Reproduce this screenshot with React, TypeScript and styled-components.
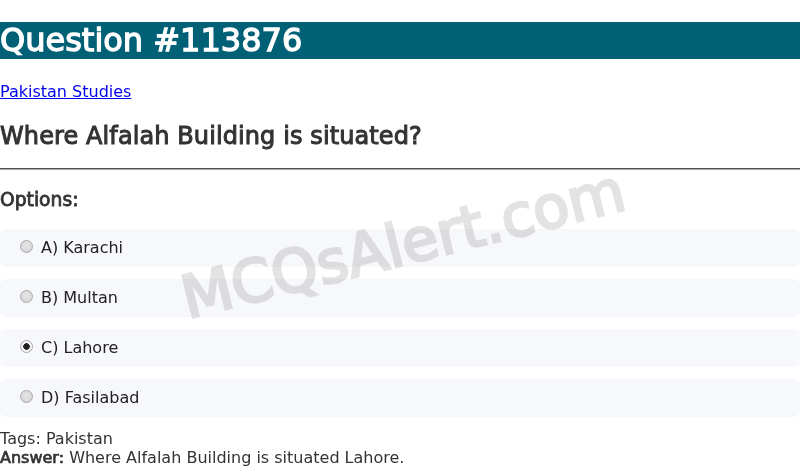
import styled, { createGlobalStyle } from 'styled-components';

const GlobalStyle = createGlobalStyle`
  html, body {
    margin: 0;
    padding: 0;
    background: #fff;
  }
  body {
    font-family: 'DejaVu Sans', sans-serif;
    color: #333;
  }
`;

// the headings in the shot use a faux-bold regular face
const fauxBold = (w: number) => `
  font-weight: 400;
  -webkit-text-stroke: ${w}px currentColor;
`;

const Page = styled.div`
  position: relative;
  overflow: hidden;
`;

const Title = styled.h1`
  margin: 22px 0 21.44px;
  background: #006075;
  color: #fff;
  font-size: 32px;
  line-height: 37px;
  ${fauxBold(1.3)}
`;

const Category = styled.p`
  margin: 22.5px 0 16px;
  font-size: 16px;
  a {
    color: #0000ee;
  }
`;

const Question = styled.h2`
  margin: 21px 0 18px;
  font-size: 24px;
  color: #333;
  letter-spacing: 0.1px;
  ${fauxBold(1)}
`;

const Rule = styled.hr`
  margin: 0;
  border: 0;
  border-top: 1px solid #555;
  border-bottom: 1px solid #aaa;
`;

const OptionsTitle = styled.h3`
  margin: 19.7px 0 18.72px;
  font-size: 18.72px;
  color: #333;
  ${fauxBold(0.8)}
`;

const OptionRow = styled.label`
  display: flex;
  align-items: center;
  gap: 8px;
  height: 38px;
  margin-bottom: 12px;
  padding-left: 20px;
  box-sizing: border-box;
  background: #f7f8fc;
  border-radius: 6px;
  font-size: 16px;
  color: #222;
`;

const Radio = styled.input`
  appearance: none;
  -webkit-appearance: none;
  margin: 0 0 2px;
  width: 13px;
  height: 13px;
  border-radius: 50%;
  border: 1px solid #a9a9a9;
  background: radial-gradient(circle at 50% 40%, #e6e6e6, #d2d2d2);
  box-sizing: border-box;
  &:checked {
    background: radial-gradient(circle, #222 0 3px, #f4f4f4 3.5px);
  }
`;

const Meta = styled.div`
  font-size: 16px;
  line-height: 19px;
  color: #333;
  b {
    ${fauxBold(0.7)}
  }
`;

const Watermark = styled.div`
  position: absolute;
  left: 403px;
  top: 244px;
  transform: translate(-50%, -50%) rotate(-14deg);
  font-size: 59px;
  color: #e3e3e3;
  mix-blend-mode: multiply;
  white-space: nowrap;
  pointer-events: none;
  ${fauxBold(2.6)}
`;

const options = ['A) Karachi', 'B) Multan', 'C) Lahore', 'D) Fasilabad'];

export default function App() {
  return (
    <Page>
      <GlobalStyle />
      <Title>Question #113876</Title>
      <Category>
        <a href="#">Pakistan Studies</a>
      </Category>
      <Question>Where Alfalah Building is situated?</Question>
      <Rule />
      <OptionsTitle>Options:</OptionsTitle>
      {options.map((o, i) => (
        <OptionRow key={o}>
          <Radio type="radio" name="opt" defaultChecked={i === 2} />
          {o}
        </OptionRow>
      ))}
      <Meta>Tags: Pakistan</Meta>
      <Meta>
        <b>Answer:</b> Where Alfalah Building is situated Lahore.
      </Meta>
      <Watermark>MCQsAlert.com</Watermark>
    </Page>
  );
}
